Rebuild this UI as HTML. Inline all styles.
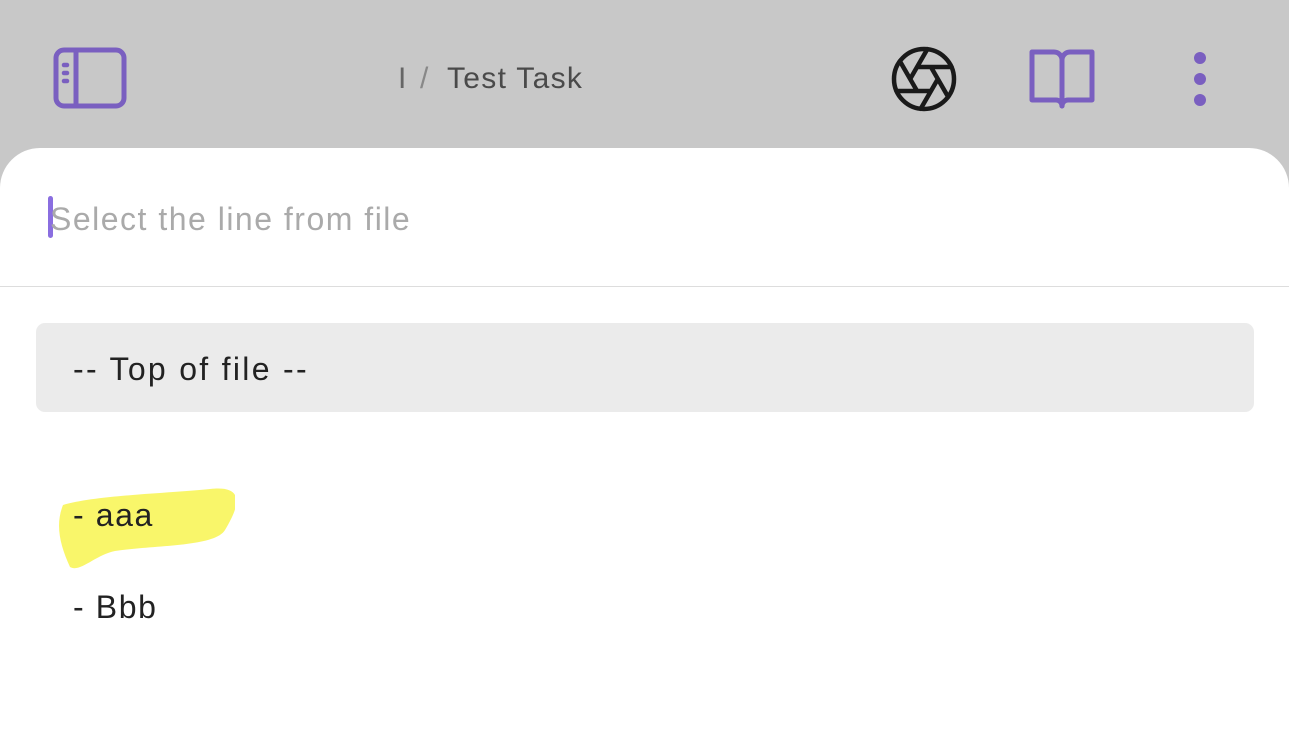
<!DOCTYPE html>
<html><head><meta charset="utf-8"><style>
body{margin:0;width:1289px;height:738px;background:#c8c8c8;font-family:"Liberation Sans",sans-serif;overflow:hidden;position:relative}
.abs{position:absolute}
.modal{position:absolute;left:0;top:148px;width:1289px;height:600px;background:#fff;border-radius:40px 40px 0 0}
.t{font-size:32px;letter-spacing:1.6px;color:#222}
</style></head><body>
<svg class="abs" style="left:52px;top:46px" width="76" height="64" viewBox="0 0 76 64"><rect x="4" y="4" width="68" height="56" rx="8" fill="none" stroke="#7a5fc0" stroke-width="5"/><line x1="24" y1="4" x2="24" y2="60" stroke="#7a5fc0" stroke-width="5"/><g stroke="#7a5fc0" stroke-width="4.5" stroke-linecap="round"><line x1="12" y1="19" x2="15" y2="19"/><line x1="12" y1="27" x2="15" y2="27"/><line x1="12" y1="35" x2="15" y2="35"/></g></svg>
<div class="abs" style="left:398px;top:62px;font-size:30px;color:#666">I</div>
<div class="abs" style="left:420px;top:62px;font-size:30px;color:#888">/</div>
<div class="abs" style="left:447px;top:62px;font-size:30px;letter-spacing:1.3px;color:#4a4a4a">Test Task</div>
<svg class="abs" style="left:888px;top:43px" width="72" height="72" viewBox="0 0 24 24" fill="none" stroke="#1a1a1a" stroke-width="1.5" stroke-linecap="round"><circle cx="12" cy="12" r="10"/><path d="m14.31 8 5.74 9.94M9.69 8h11.48M7.38 12l5.74-9.94M9.69 16 3.95 6.06M14.31 16H2.83M16.62 12l-5.74 9.94"/></svg>
<svg class="abs" style="left:1026px;top:46px" width="72" height="66" viewBox="0 0 72 66" fill="none" stroke="#7a5fc0" stroke-width="5" stroke-linejoin="round" stroke-linecap="round"><path d="M6 6h22a8 8 0 0 1 8 8v46a6 6 0 0 0-6-6H6z"/><path d="M66 6H44a8 8 0 0 0-8 8v46a6 6 0 0 1 6-6h24z"/></svg>
<svg class="abs" style="left:1188px;top:50px" width="24" height="60"><circle cx="12" cy="8" r="6" fill="#7a5fc0"/><circle cx="12" cy="29" r="6" fill="#7a5fc0"/><circle cx="12" cy="50" r="6" fill="#7a5fc0"/></svg>
<div class="modal"></div>
<div class="abs" style="left:48px;top:196px;width:5px;height:42px;background:#8a6ee0;border-radius:3px"></div>
<div class="abs" style="left:50px;top:201px;font-size:32px;letter-spacing:1.5px;color:#aaa">Select the line from file</div>
<div class="abs" style="left:0;top:286px;width:1289px;height:1px;background:#ddd"></div>
<div class="abs" style="left:36px;top:323px;width:1218px;height:89px;background:#ebebeb;border-radius:9px"></div>
<div class="abs t" style="left:73px;top:351px;letter-spacing:2.3px">-- Top of file --</div>
<svg class="abs" style="left:55px;top:485px" width="180" height="95"><path d="M8 20 C40 10 120 8 155 4 C190 0 185 20 170 45 C160 62 100 60 60 66 C40 70 25 88 15 82 C5 60 0 40 8 20z" fill="#f8f55a" opacity="0.9"/></svg>
<div class="abs t" style="left:73px;top:497px">- aaa</div>
<div class="abs t" style="left:73px;top:589px">- Bbb</div>
</body></html>
